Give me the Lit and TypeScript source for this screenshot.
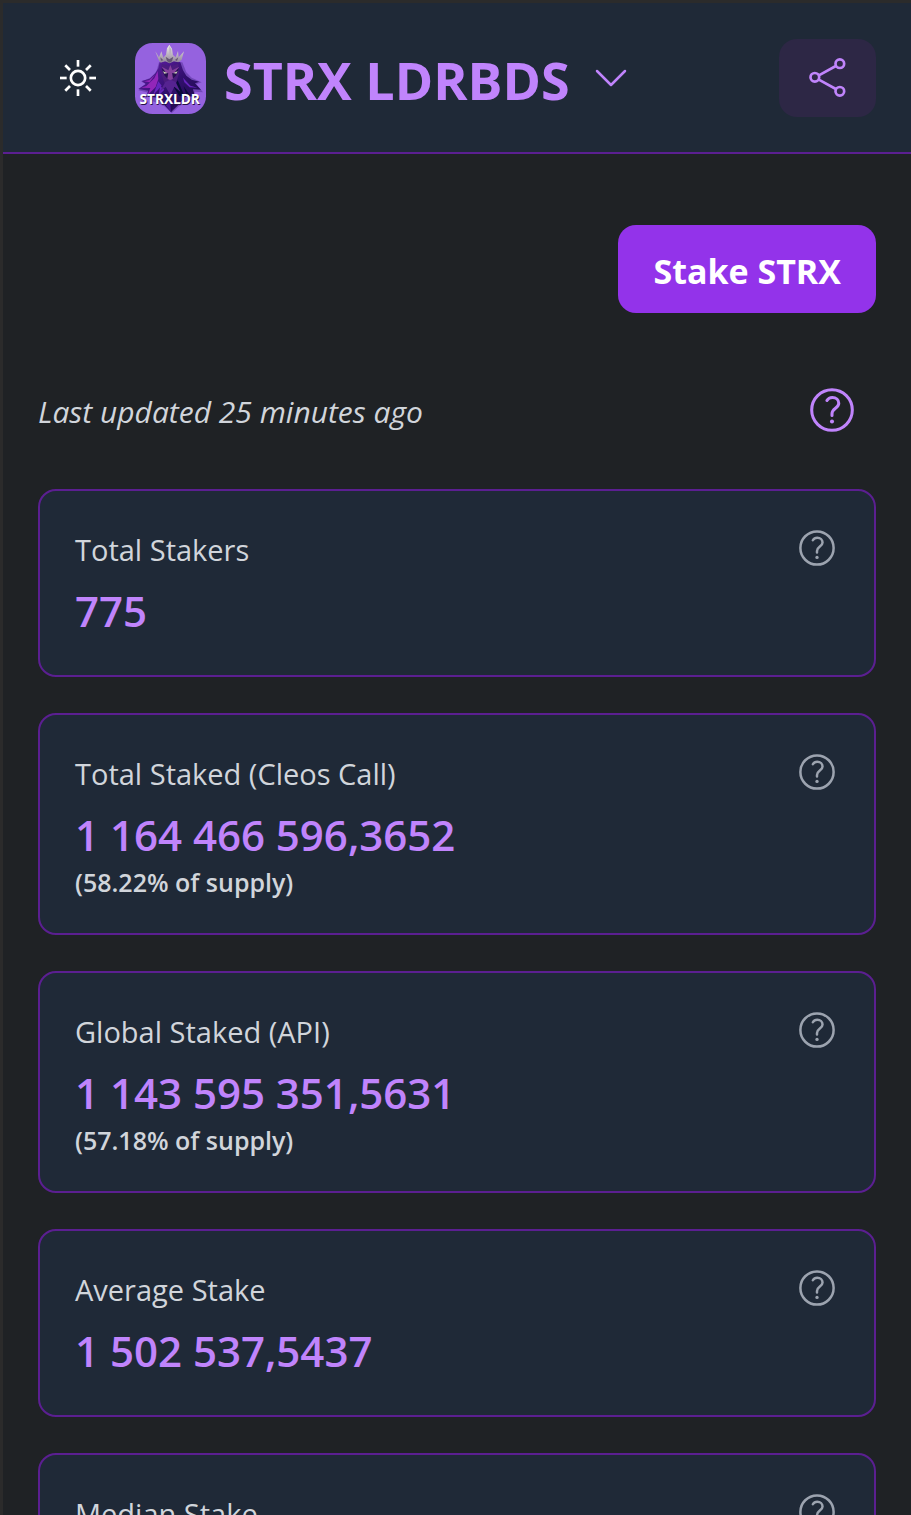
import { LitElement, html, svg, css, nothing } from "lit";
import { customElement, property } from "lit/decorators.js";

interface Stat {
  label: string;
  value?: string;
  note?: string;
}

const STATS: Stat[] = [
  { label: "Total Stakers", value: "775" },
  { label: "Total Staked (Cleos Call)", value: "1 164 466 596,3652", note: "(58.22% of supply)" },
  { label: "Global Staked (API)", value: "1 143 595 351,5631", note: "(57.18% of supply)" },
  { label: "Average Stake", value: "1 502 537,5437" },
  { label: "Median Stake" },
];

const helpIcon = html`
  <svg viewBox="0 0 130 130" fill="none" stroke="currentColor" stroke-width="9" stroke-linecap="round" aria-hidden="true">
    <circle cx="65" cy="65" r="60"></circle>
    <path d="M50 37C54 30 60 28 66 28C77 28 85 35 85 45C85 60 65 60 65 76V81"></path>
    <circle cx="65" cy="99" r="6" fill="currentColor" stroke="none"></circle>
  </svg>
`;

const sunIcon = html`
  <svg class="sun" viewBox="0 0 108 108" fill="none" stroke="currentColor" stroke-width="8" aria-hidden="true">
    <circle cx="54" cy="54" r="21.500"></circle>
    ${[0, 45, 90, 135, 180, 225, 270, 315].map(
      (a) => svg`<path d="M54 0V20" transform="rotate(${a} 54 54)"></path>`
    )}
  </svg>
`;

const shareIcon = html`
  <svg class="share-icon" viewBox="0 0 108 117" fill="none" stroke="currentColor" stroke-width="8" aria-hidden="true">
    <circle cx="16" cy="58" r="13"></circle>
    <circle cx="91" cy="17" r="13"></circle>
    <circle cx="91" cy="100" r="13"></circle>
    <path d="M28 52L79 24M28 65L79 93"></path>
  </svg>
`;

const logo = html`
  <svg class="logo" viewBox="0 0 213 213" role="img" aria-label="STRXLDR">
    <defs>
      <linearGradient id="hair" x1="0" y1="0" x2="1" y2="1">
        <stop offset="0" stop-color="#6a1fb0"></stop>
        <stop offset=".5" stop-color="#32106f"></stop>
        <stop offset="1" stop-color="#1a0a45"></stop>
      </linearGradient>
      <linearGradient id="crown" x1="0" y1="0" x2="0" y2="1">
        <stop offset="0" stop-color="#f2efee"></stop>
        <stop offset="1" stop-color="#8d8096"></stop>
      </linearGradient>
    </defs>
    <rect width="213" height="213" rx="53" fill="#9562df"></rect>
    <path d="M72 58L142 58L154 88L170 104L200 118L184 124L204 148L180 146L168 172L132 190L110 211L88 190L52 174L36 148L10 142L34 122L18 116L46 104L64 86Z" fill="#5b35a0" opacity=".6"></path>
    <path d="M74 58Q104 48 136 58L144 82L154 98L170 110L193 116L180 121L198 140L174 139L180 160L150 162L130 186L108 207L88 186L66 164L34 160L40 143L10 138L32 123L20 114L44 107L60 92L70 76Z" fill="url(#hair)"></path>
    <path d="M68 84L58 106L34 129L18 134L46 135L38 156L62 132L70 108ZM60 96L42 112L27 115L44 118Z" fill="#9226b9"></path>
    <path d="M70 115L54 157L80 128ZM144 104L166 128L188 134L164 133L148 118ZM76 130L70 158L88 140Z" fill="#6725be"></path>
    <path d="M128 112L148 158L134 160L116 132ZM146 130L166 158L155 158Z" fill="#090b38"></path>
    <path d="M80 62L104 70L130 62L132 92L123 120L106 136L88 119L79 94Z" fill="#4b1c7e"></path>
    <path d="M80 76L99 87L99 108L89 98ZM132 76L112 87L112 108L123 98Z" fill="#241050"></path>
    <path d="M80 71L100 82L106 66L112 82L133 71L117 91L111 90L114 107L106 112L97 107L100 90L94 91Z" fill="#85409d"></path>
    <path d="M84 85L97 90L88 92ZM128 85L115 90L124 92Z" fill="#d4d5bc"></path>
    <path d="M106 110L122 117L136 146L118 131L106 156L92 131L74 147L91 117Z" fill="#562391"></path>
    <path d="M90 184L106 172L122 184L108 207Z" fill="#491396"></path>
    <path d="M106 180L122 184L108 207Z" fill="#240b57"></path>
    <path d="M61 25L72 43L75 35L79 25L85 44L93 35L96 16L103 5L111 17L114 36L122 43L129 24L131 43L147 25L140 50L130 58L117 55L104 61L90 55L77 59L70 49Z" fill="url(#crown)"></path>
    <path d="M92 41L103 49L115 41L111 55L104 59L96 54ZM76 43L85 52L78 53ZM130 43L126 54L120 51Z" fill="#655773"></path>
    <path d="M103 8L109 20L107 38L103 38Z" fill="#b9b2bd"></path>
    <text class="logo-shadow" x="106" y="186" text-anchor="middle">STRXLDR</text>
    <text class="logo-text" x="104" y="183" text-anchor="middle">STRXLDR</text>
  </svg>
`;

const reset = css`
  *,
  *::before,
  *::after {
    box-sizing: border-box;
  }
  button {
    margin: 0;
    padding: 0;
    border: 0;
    background: none;
    color: inherit;
    font: inherit;
    cursor: pointer;
  }
  svg {
    display: block;
    flex: none;
  }
`;

@customElement("stat-card")
export class StatCard extends LitElement {
  @property({ attribute: false }) stat!: Stat;

  static styles = [
    reset,
    css`
      :host {
        display: block;
      }
      .card {
        display: flex;
        align-items: flex-start;
        justify-content: space-between;
        min-height: 188px;
        padding: 35px 35px 34px;
        border: 2px solid #5b1f91;
        border-radius: 18px;
        background: #1f2937;
      }
      .label {
        margin: 0;
        color: #d1d5db;
        font-size: 29px;
        font-weight: 400;
        line-height: 48px;
      }
      .value {
        margin: 7px 0 0;
        color: #c084fc;
        font-size: 42px;
        font-weight: 600;
        line-height: 60px;
      }
      .note {
        margin: 0;
        color: #d1d5db;
        font-size: 25px;
        font-weight: 600;
        line-height: 34px;
      }
      .help {
        padding: 4px;
        color: #9ca3af;
      }
      .help svg {
        width: 36px;
        height: 36px;
      }
    `,
  ];

  render() {
    const { label, value, note } = this.stat;
    return html`
      <article class="card">
        <div>
          <h2 class="label">${label}</h2>
          ${value ? html`<p class="value">${value}</p>` : nothing}
          ${note ? html`<p class="note">${note}</p>` : nothing}
        </div>
        <button class="help" type="button" aria-label="About ${label}">${helpIcon}</button>
      </article>
    `;
  }
}

@customElement("app-root")
export class AppRoot extends LitElement {
  static styles = [
    reset,
    css`
      :host {
        display: flex;
        flex-direction: column;
        box-sizing: border-box;
        height: 100vh;
        overflow: hidden;
        border-top: 3px solid #2b2b2b;
        border-left: 3px solid #2b2b2b;
        background: #1f2225;
        color: #d1d5db;
        font-family: "Open Sans", "Noto Sans", sans-serif;
      }
      .header {
        display: flex;
        flex: none;
        align-items: center;
        justify-content: space-between;
        padding: 36px 35px 35px;
        border-bottom: 2px solid #5b1f91;
        background: #1f2937;
      }
      .brand {
        display: flex;
        align-items: center;
        gap: 17px;
      }
      .theme {
        padding: 21px 22px;
        color: #fff;
      }
      .sun {
        width: 36px;
        height: 36px;
      }
      .site {
        display: flex;
        align-items: center;
        gap: 18px;
        height: 78px;
        color: #c084fc;
      }
      .logo {
        width: 71px;
        height: 71px;
      }
      .logo-text,
      .logo-shadow {
        fill: #fff;
        font-size: 41px;
        font-weight: 700;
      }
      .logo-shadow {
        fill: #251048;
      }
      .title {
        margin: 0;
        padding-top: 4px;
        font-size: 52px;
        font-weight: 700;
        line-height: 72px;
        white-space: nowrap;
      }
      .chevron {
        width: 46px;
        height: 36px;
      }
      .share {
        padding: 19px 30px 20px;
        border-radius: 18px;
        background: #2d2745;
        color: #c084fc;
      }
      .share-icon {
        width: 37px;
        height: 39px;
      }
      .main {
        flex: 1;
        min-height: 0;
        padding: 71px 35px 36px;
        overflow-y: auto;
        scrollbar-width: none;
      }
      .actions {
        display: flex;
        justify-content: flex-end;
      }
      .stake {
        padding: 24px 35px 20px;
        border-radius: 18px;
        background: #9333ea;
        color: #fff;
        font-size: 34px;
        font-weight: 700;
        line-height: 44px;
        text-decoration: none;
      }
      .status {
        display: flex;
        align-items: center;
        justify-content: space-between;
        margin: 53px 0 35px;
      }
      .updated {
        margin: 0;
        padding-top: 4px;
        font-size: 30px;
        font-style: italic;
        line-height: 44px;
      }
      .info {
        padding: 22px;
        color: #c084fc;
      }
      .info svg {
        width: 44px;
        height: 44px;
      }
      .stats {
        display: grid;
        gap: 36px;
      }
    `,
  ];

  render() {
    return html`
      <header class="header">
        <div class="brand">
          <button class="theme" type="button" aria-label="Toggle theme">${sunIcon}</button>
          <button class="site" type="button" aria-haspopup="menu">
            ${logo}
            <span class="title">STRX LDRBDS</span>
            <svg class="chevron" viewBox="0 0 46 36" fill="none" stroke="currentColor" stroke-width="2.500" stroke-linecap="round" stroke-linejoin="round" aria-hidden="true">
              <path d="M9 11L23 25L37 11"></path>
            </svg>
          </button>
        </div>
        <button class="share" type="button" aria-label="Share">${shareIcon}</button>
      </header>
      <main class="main">
        <div class="actions"><a class="stake" href="#stake">Stake STRX</a></div>
        <div class="status">
          <p class="updated">Last updated 25 minutes ago</p>
          <button class="info" type="button" aria-label="About this page">${helpIcon}</button>
        </div>
        <section class="stats">${STATS.map((s) => html`<stat-card .stat=${s}></stat-card>`)}</section>
      </main>
    `;
  }
}
